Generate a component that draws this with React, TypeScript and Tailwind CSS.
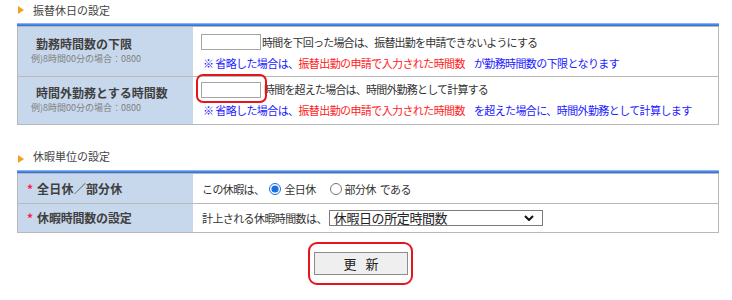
import React from 'react';

const font = "font-['Noto_Sans_CJK_JP','Liberation_Sans',sans-serif]";

function SectionTitle({ title, className }: { title: string; className: string }) {
  return (
    <div className={`flex pl-[18px] ${className}`}>
      <svg width="6" height="8" viewBox="0 0 6 8" className="mr-[9px] shrink-0">
        <polygon points="0,0 6,4 0,8" fill="#f5a11c" />
      </svg>
      <span className="text-[11px] leading-[14px] tracking-[0px] text-[#444]">{title}</span>
    </div>
  );
}

function BlueBar() {
  return <div className="h-[3px] bg-gradient-to-b from-[#a9c8f5] via-[#4b8be8] to-[#2b6ad8]" />;
}

function Note({ tail }: { tail: string }) {
  return (
    <div className="flex text-[11px] leading-[14px] tracking-[-0.6px]">
      <span className="text-[#1a1aff]">※ 省略した場合は、</span>
      <span className="text-[#ff1a1a]">振替出勤の申請で入力された時間数</span>
      <span className="ml-[9px] text-[#1a1aff]">{tail}</span>
    </div>
  );
}

function TimeInput() {
  return <div className="w-[60px] h-[16px] border border-[#a5a5a5] bg-white" />;
}

export default function App() {
  return (
    <div className={`w-[732px] h-[300px] bg-white text-[#333] overflow-hidden ${font}`}>
      <SectionTitle title="振替休日の設定" className="h-[23px] items-center pb-[3px]" />

      <div className="ml-[17px] w-[702px]">
        <BlueBar />
        <div className="border border-[#b8b8b8]">
          <div className="flex h-[50px] border-b border-[#b8b8b8]">
            <div className="w-[175px] bg-[#c8d8ec] pt-[9px]">
              <div className="pl-[18px] text-[12px] leading-[16px] font-bold text-[#3f3f3f]">勤務時間数の下限</div>
              <div className="pl-[13px] mt-[1px] text-[9px] leading-[12px] text-[#808080]">例)8時間00分の場合：0800</div>
            </div>
            <div className="flex-1 pl-[8px] pt-[7px]">
              <div className="flex items-center">
                <TimeInput />
                <span className="ml-[1px] text-[11px] leading-[14px] tracking-[-0.8px]">時間を下回った場合は、振替出勤を申請できないようにする</span>
              </div>
              <div className="mt-[6px] pl-[2px]">
                <Note tail="が勤務時間数の下限となります" />
              </div>
            </div>
          </div>

          <div className="flex h-[47px]">
            <div className="w-[175px] bg-[#c8d8ec] pt-[8px]">
              <div className="pl-[18px] text-[12px] leading-[16px] font-bold text-[#3f3f3f]">時間外勤務とする時間数</div>
              <div className="pl-[13px] mt-[1px] text-[9px] leading-[12px] text-[#808080]">例)8時間00分の場合：0800</div>
            </div>
            <div className="flex-1 pl-[8px] pt-[5px]">
              <div className="flex items-center">
                <div className="relative">
                  <TimeInput />
                  <div className="absolute left-[-5px] top-[-8px] w-[71px] h-[29px] rounded-[7px] border-2 border-[#e8141b]" />
                </div>
                <span className="ml-[3px] -mt-[3px] text-[11px] leading-[14px] tracking-[-0.8px]">時間を超えた場合は、時間外勤務として計算する</span>
              </div>
              <div className="mt-[5px] pl-[2px]">
                <Note tail="を超えた場合に、時間外勤務として計算します" />
              </div>
            </div>
          </div>
        </div>
      </div>

      <SectionTitle title="休暇単位の設定" className="h-[45px] items-end pb-[7px]" />

      <div className="ml-[17px] w-[702px]">
        <BlueBar />
        <div className="border border-[#b8b8b8]">
          <div className="flex h-[30px] border-b border-[#b8b8b8]">
            <div className="w-[175px] bg-[#c8d8ec] flex items-center pl-[9px]">
              <span className="text-[#ff1a4a] text-[12px] font-bold mr-[4px]">*</span>
              <span className="text-[12px] leading-[16px] font-bold text-[#3f3f3f] tracking-[0.2px]">全日休／部分休</span>
            </div>
            <div className="flex-1 flex items-center pl-[9px] text-[11px] leading-[14px] tracking-[-0.6px]">
              <span>この休暇は、</span>
              <input type="radio" name="unit" defaultChecked className="ml-[5px] mr-[3px] w-[12px] h-[12px] m-0 accent-[#1a6fe0]" />
              <span>全日休</span>
              <input type="radio" name="unit" className="ml-[14px] mr-[3px] w-[12px] h-[12px] m-0" />
              <span>部分休</span>
              <span className="ml-[4px]">である</span>
            </div>
          </div>

          <div className="flex h-[28px]">
            <div className="w-[175px] bg-[#c8d8ec] flex items-center pl-[9px]">
              <span className="text-[#ff1a4a] text-[12px] font-bold mr-[4px]">*</span>
              <span className="text-[12px] leading-[16px] font-bold text-[#3f3f3f] tracking-[-0.2px]">休暇時間数の設定</span>
            </div>
            <div className="flex-1 flex items-center pl-[9px]">
              <span className="text-[11px] leading-[14px] tracking-[-0.6px]">計上される休暇時間数は、</span>
              <div className="ml-[2px] w-[214px] h-[16px] border border-[#7a7a7a] flex items-center justify-between pl-[4px] pr-[8px]">
                <span className="text-[13px] leading-[14px] tracking-[-0.4px] text-[#222]">休暇日の所定時間数</span>
                <svg width="10" height="6" viewBox="0 0 10 6">
                  <path d="M1 1 L5 5 L9 1" fill="none" stroke="#111" strokeWidth="2" />
                </svg>
              </div>
            </div>
          </div>
        </div>
      </div>

      <div className="ml-[308px] mt-[9px] w-fit rounded-[9px] border-2 border-[#e8141b] pl-[4px] pr-[3px] py-[8px]">
        <button className="w-[94px] h-[23px] bg-[#efefef] border border-[#8c8c8c] flex items-center justify-center gap-[9px] text-[13px] text-[#222]">
          <span>更</span>
          <span>新</span>
        </button>
      </div>
    </div>
  );
}
